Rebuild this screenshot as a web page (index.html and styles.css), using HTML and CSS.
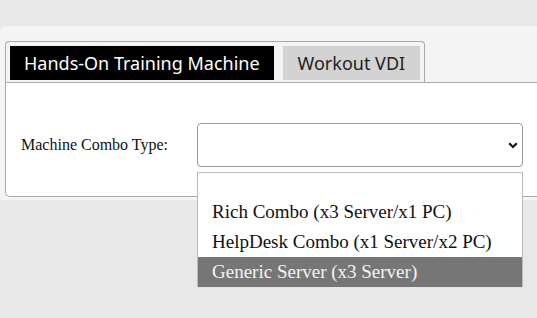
FILE: index.html
```html
<!DOCTYPE html>
<html lang="en">
<head>
  <meta charset="UTF-8">
  <meta name="viewport" content="width=device-width, initial-scale=1.0">
  <title>Machine</title>
  <link rel="stylesheet" href="styles.css">
</head>
<body>
  <div class="page">
    <div class="tabs">
      <div class="tab-list">
        <div class="tab active">Hands-On Training Machine</div>
        <div class="tab">Workout VDI</div>
      </div>
      <div class="tab-body">
        <div class="field">
          <label class="field-label">Machine Combo Type:</label>
          <div class="combo">
            <div class="select">
              <svg width="10" height="7" viewBox="0 0 10 7"><path d="M1.2 1.2 L5 5 L8.8 1.2" fill="none" stroke="#111" stroke-width="2.2"/></svg>
            </div>
            <ul class="options">
              <li class="option">Rich Combo (x3 Server/x1 PC)</li>
              <li class="option">HelpDesk Combo (x1 Server/x2 PC)</li>
              <li class="option selected">Generic Server (x3 Server)</li>
            </ul>
          </div>
        </div>
      </div>
    </div>
  </div>
</body>
</html>
```

FILE: styles.css
```css
html,
body {
  min-height: 318px;
}

body {
  margin: 0;
  background: #e8e8e8;
  font-family: 'Liberation Serif', serif;
  color: #111;
}

.page {
  margin-top: 26px;
  background: #f4f4f4;
  border-radius: 6px 0 0 0;
  padding: 15px 0 3px 5px;
}

.tab-list {
  display: inline-flex;
  gap: 9px;
  padding: 4px 4px 2px 4px;
  border: 1px solid #aaa;
  border-bottom: none;
  border-radius: 4px 4px 0 0;
}

.tab {
  height: 34px;
  line-height: 34px;
  font-family: 'Noto Sans', sans-serif;
  font-size: 18px;
  background: #d3d3d3;
  color: #222;
  padding: 0 15px;
}

.tab.active {
  background: #000;
  color: #fff;
  padding: 0 14px;
}

.tab-body {
  background: #fff;
  border: 1px solid #aaa;
  border-right: none;
  border-radius: 0 0 0 5px;
  padding: 40px 0 29px 15px;
}

.field {
  display: flex;
  align-items: center;
}

.field-label {
  width: 176px;
  font-size: 16px;
}

.combo {
  position: relative;
  width: 326px;
}

.select {
  height: 42px;
  border: 1px solid #999;
  border-radius: 4px;
  display: flex;
  align-items: center;
  justify-content: flex-end;
  padding-right: 4px;
}

.options {
  position: absolute;
  top: calc(100% + 5px);
  left: 0;
  right: 0;
  z-index: 5;
  margin: 0;
  padding: 24px 0 0 0;
  list-style: none;
  background: #fff;
  border: 1px solid #bbb;
  border-bottom: none;
  font-size: 19px;
}

.option {
  height: 30px;
  line-height: 30px;
  padding-left: 14px;
}

.option.selected {
  background: #767676;
  color: #f4f4f4;
}
```
